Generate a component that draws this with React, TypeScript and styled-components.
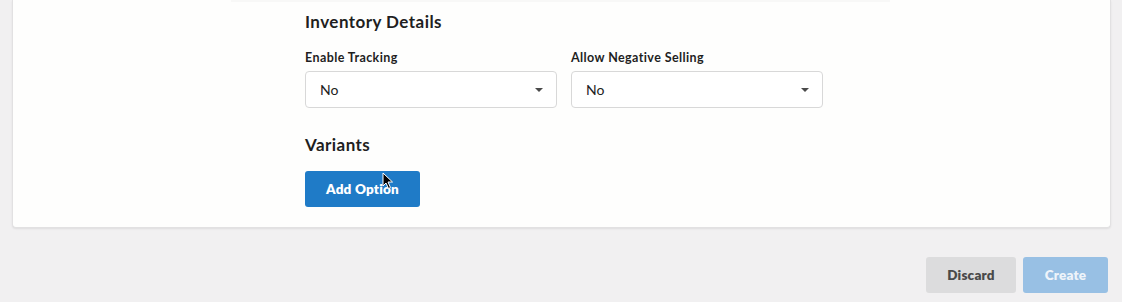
import styled, { createGlobalStyle } from "styled-components";

const GlobalStyle = createGlobalStyle`
  html, body {
    margin: 0;
    padding: 0;
    background: #f1f0f1;
    font-family: "Lato", "Liberation Sans", sans-serif;
    color: #222;
  }
`;

const Page = styled.div`
  width: 1122px;
  height: 302px;
  overflow: hidden;
  padding: 0 11px 0 12px;
  box-sizing: border-box;
`;

const Card = styled.div`
  background: #fefefd;
  border: 1px solid #e2e1e2;
  border-top: 0;
  border-radius: 0 0 4px 4px;
  box-shadow: 0 1px 2px rgba(0, 0, 0, 0.08);
  padding: 0 0 20px;
`;

const Edge = styled.div`
  height: 2px;
  margin: 0 220px 0 218px;
  background: rgba(0, 0, 0, 0.025);
`;

const Content = styled.div`
  width: 518px;
  margin-left: 292px;
  display: flex;
  flex-direction: column;
`;

const Heading = styled.h2`
  margin: 10px 0 0;
  font-size: 17px;
  line-height: 20px;
  font-weight: 700;
  letter-spacing: 0.45px;
  color: #1f1f1f;
`;

const Row = styled.div`
  display: grid;
  grid-template-columns: 252px 252px;
  column-gap: 14px;
  margin-top: 18px;
`;

const Field = styled.div`
  display: flex;
  flex-direction: column;
`;

const Label = styled.label`
  font-size: 12.5px;
  line-height: 15px;
  font-weight: 700;
  letter-spacing: 0.4px;
  color: #1f1f1f;
  margin-bottom: 6px;
`;

const Select = styled.div`
  height: 37px;
  box-sizing: border-box;
  border: 1px solid #d8d8d8;
  border-radius: 4px;
  background: #fff;
  display: flex;
  align-items: center;
  justify-content: space-between;
  padding: 0 13px 0 14px;
  font-size: 14px;
  color: #222;
`;

const Caret = styled.span`
  width: 0;
  height: 0;
  border-left: 4px solid transparent;
  border-right: 4px solid transparent;
  border-top: 4px solid #4a4a4a;
`;

const VariantsHeading = styled(Heading)`
  margin-top: 27px;
`;

const Button = styled.button<{ $variant: "primary" | "muted" | "disabled" }>`
  height: 36px;
  border: 0;
  border-radius: 3px;
  font-family: "Lato", "Liberation Sans", sans-serif;
  font-size: 13.5px;
  font-weight: 800;
  letter-spacing: 0.2px;
  cursor: pointer;
  padding: 0 20px;
  background: ${(p) =>
    p.$variant === "primary" ? "#1f7bc7" : p.$variant === "muted" ? "#dcdcdd" : "#98c0e4"};
  color: ${(p) => (p.$variant === "muted" ? "#4a4a4a" : p.$variant === "disabled" ? "#eef4fa" : "#fff")};
`;

const AddButton = styled(Button)`
  width: 115px;
  margin-top: 16px;
  position: relative;
`;

const Cursor = styled.svg`
  position: absolute;
  left: 77px;
  top: 1px;
`;

const Footer = styled.div`
  display: flex;
  justify-content: flex-end;
  gap: 7px;
  margin-top: 29px;
  padding-right: 3px;
`;

export default function App() {
  return (
    <>
      <GlobalStyle />
      <Page>
        <Card>
          <Edge />
          <Content>
            <Heading>Inventory Details</Heading>
            <Row>
              <Field>
                <Label>Enable Tracking</Label>
                <Select>
                  No
                  <Caret />
                </Select>
              </Field>
              <Field>
                <Label>Allow Negative Selling</Label>
                <Select>
                  No
                  <Caret />
                </Select>
              </Field>
            </Row>
            <VariantsHeading>Variants</VariantsHeading>
            <div>
              <AddButton $variant="primary">
                Add Option
                <Cursor width="12" height="18" viewBox="0 0 12 18">
                  <path d="M1 1 L1 14 L4 11 L6.5 16.5 L8.5 15.5 L6 10 L10.5 10 Z" fill="#000" stroke="#fff" strokeWidth="1" />
                </Cursor>
              </AddButton>
            </div>
          </Content>
        </Card>
        <Footer>
          <Button $variant="muted" style={{ width: 90 }}>Discard</Button>
          <Button $variant="disabled" style={{ width: 85 }}>Create</Button>
        </Footer>
      </Page>
    </>
  );
}
